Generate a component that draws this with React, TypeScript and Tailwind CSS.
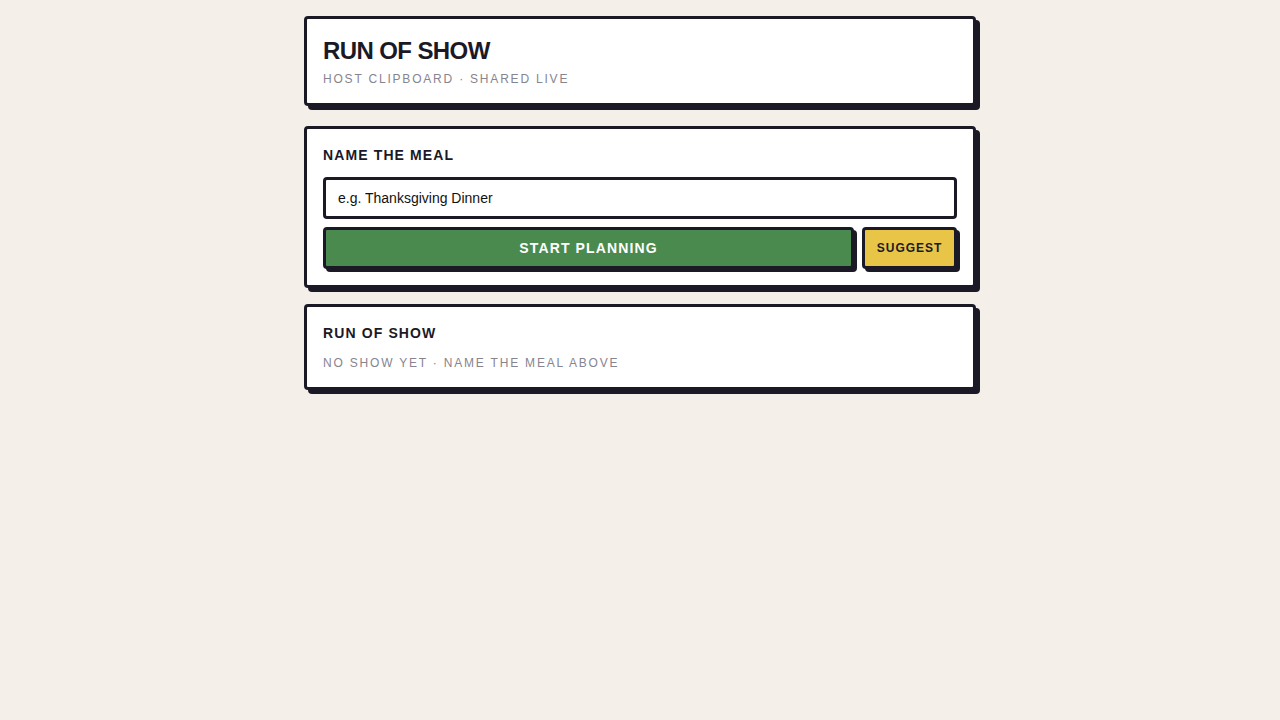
import React from "react";

export default function App() {
  return (
    <div
      className="min-h-screen w-full bg-[#f4f0e9] pt-4"
      style={{ fontFamily: '"Liberation Sans", Arial, sans-serif' }}
    >
      <div className="mx-auto flex w-[672px] flex-col">
        <div className="mb-5 rounded-[4px] border-[3px] border-[#1b1926] bg-white px-4 py-4 shadow-[4px_4px_0_#1b1926]">
          <h1 className="text-[24px] font-bold leading-8 tracking-[-0.025em] text-[#1b1926]">
            RUN OF SHOW
          </h1>
          <p className="mt-1 pt-[1px] text-[12px] leading-[15px] tracking-[0.15em] text-[#86848f]">
            HOST CLIPBOARD · SHARED LIVE
          </p>
        </div>

        <div className="mb-4 rounded-[4px] border-[3px] border-[#1b1926] bg-white px-4 py-4 shadow-[4px_4px_0_#1b1926]">
          <h2 className="text-[14px] font-bold leading-5 tracking-[0.08em] text-[#1b1926]">
            NAME THE MEAL
          </h2>
          <input
            className="mt-3 box-border h-[42px] w-full rounded-[4px] border-[3px] border-[#1b1926] bg-white px-3 text-[14px] text-[#111] outline-none placeholder:text-[#111]"
            placeholder="e.g. Thanksgiving Dinner"
          />
          <div className="mt-2 flex gap-2">
            <button className="h-[42px] flex-1 rounded-[4px] border-[3px] border-[#1b1926] bg-[#4a8a4e] text-[14px] font-bold tracking-[0.08em] text-white shadow-[3px_3px_0_#1b1926]">
              START PLANNING
            </button>
            <button className="h-[42px] w-[95px] rounded-[4px] border-[3px] border-[#1b1926] bg-[#e8c547] text-[12px] font-bold tracking-[0.08em] text-[#1b1926] shadow-[3px_3px_0_#1b1926]">
              SUGGEST
            </button>
          </div>
        </div>

        <div className="rounded-[4px] border-[3px] border-[#1b1926] bg-white px-4 py-4 shadow-[4px_4px_0_#1b1926]">
          <h2 className="text-[14px] font-bold leading-5 tracking-[0.08em] text-[#1b1926]">
            RUN OF SHOW
          </h2>
          <p className="mt-3 text-[12px] leading-4 tracking-[0.15em] text-[#86848f]">
            NO SHOW YET · NAME THE MEAL ABOVE
          </p>
        </div>
      </div>
    </div>
  );
}
